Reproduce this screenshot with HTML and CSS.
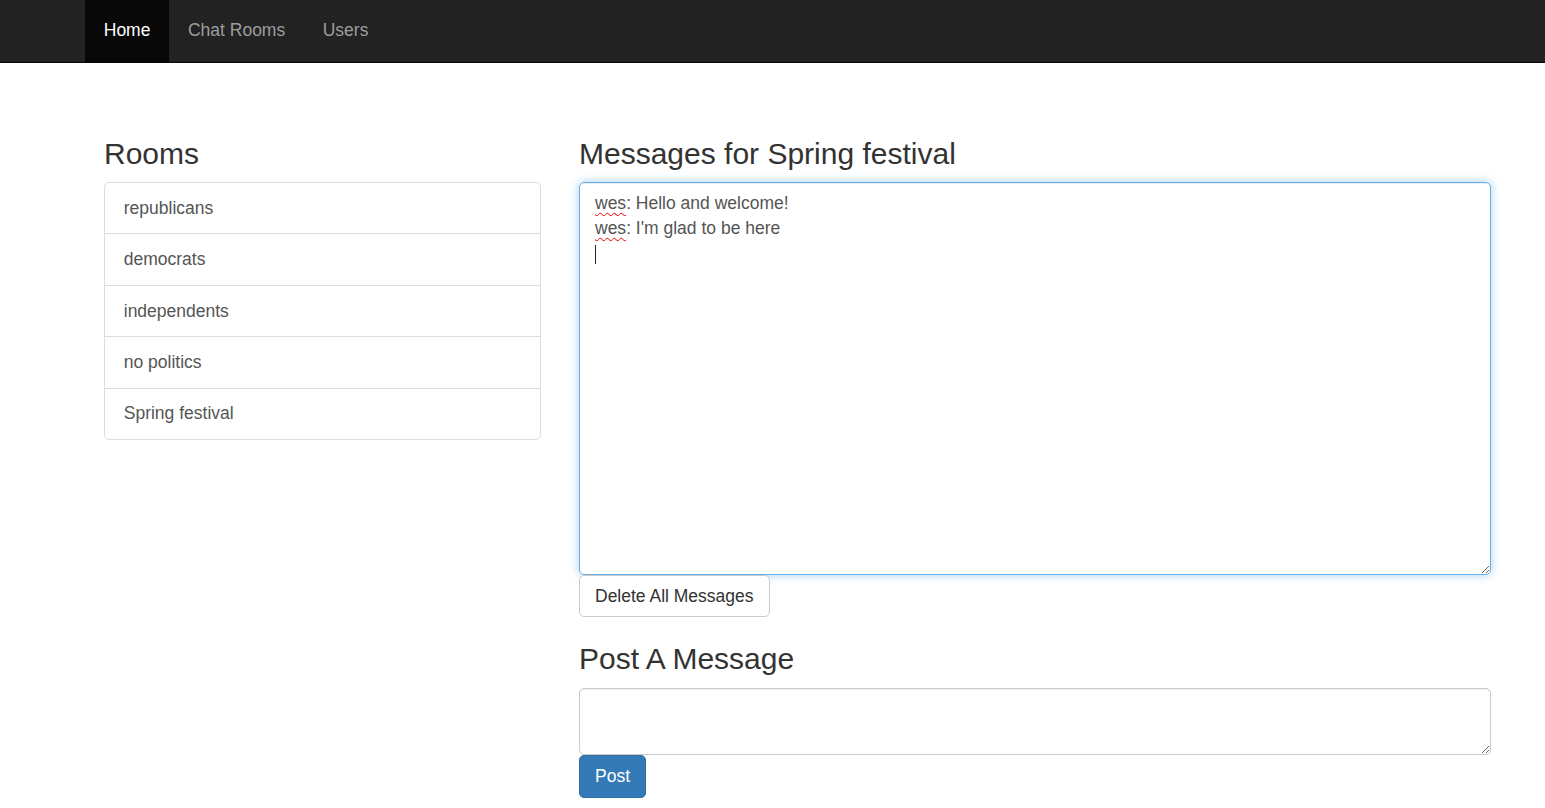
FILE: index.html
```html
<!DOCTYPE html>
<html lang="en">
<head>
<meta charset="utf-8">
<title>Chat</title>
<link rel="stylesheet" href="styles.css">
</head>
<body>
<nav class="navbar">
  <ul class="nav">
    <li><a class="nav-link active" href="#">Home</a></li>
    <li><a class="nav-link" href="#">Chat Rooms</a></li>
    <li><a class="nav-link" href="#">Users</a></li>
  </ul>
</nav>
<main class="main">
  <section class="rooms">
    <h3 class="heading">Rooms</h3>
    <ul class="list-group">
      <li><a class="list-item" href="#">republicans</a></li>
      <li><a class="list-item" href="#">democrats</a></li>
      <li><a class="list-item" href="#">independents</a></li>
      <li><a class="list-item" href="#">no politics</a></li>
      <li><a class="list-item" href="#">Spring festival</a></li>
    </ul>
  </section>
  <section class="chat">
    <h3 class="heading">Messages for Spring festival</h3>
    <div class="messages">
      <div class="line"><span class="misspelt">wes</span>: Hello and welcome!</div>
      <div class="line"><span class="misspelt">wes</span>: I'm glad to be here</div>
      <div class="line"><span class="caret"></span></div>
    </div>
    <button class="btn btn-default" type="button">Delete All Messages</button>
    <h3 class="heading">Post A Message</h3>
    <textarea class="post-input" rows="2"></textarea>
    <button class="btn btn-primary" type="button">Post</button>
  </section>
</main>
</body>
</html>
```
FILE: styles.css
```css
* { box-sizing: border-box; }
html, body { margin: 0; padding: 0; }
body {
  font-family: "Liberation Sans", Arial, sans-serif;
  font-size: 17.5px;
  line-height: 25px;
  color: #333;
  background: #fff;
}
.navbar {
  height: 63px;
  background: #222;
  border-bottom: 1px solid #080808;
  padding-left: 85px;
}
.nav {
  list-style: none;
  margin: 0;
  padding: 0;
  display: flex;
}
.nav-link {
  display: block;
  height: 62px;
  padding: 17.75px 18.75px;
  color: #9d9d9d;
  text-decoration: none;
}
.nav-link.active {
  color: #fff;
  background: #080808;
}
.main {
  display: flex;
  gap: 38px;
  padding: 48.6px 54px 0 104px;
}
.rooms { width: 437px; flex: none; }
.chat { flex: 1; display: flex; flex-direction: column; align-items: flex-start; }
.heading {
  font-size: 30px;
  line-height: 33px;
  font-weight: 500;
  margin: 25px 0 12.5px;
  color: #333;
}
.list-group {
  list-style: none;
  margin: 0;
  padding: 0;
}
.list-item {
  display: block;
  padding: 12.69px 18.75px;
  border: 1px solid #ddd;
  margin-bottom: -1px;
  color: #555;
  text-decoration: none;
  background: #fff;
}
.list-group li:first-child .list-item { border-radius: 5px 5px 0 0; }
.list-group li:last-child .list-item { border-radius: 0 0 5px 5px; }
.messages {
  width: 100%;
  height: 393px;
  padding: 7.5px 15px;
  border: 1px solid #66afe9;
  border-radius: 5px;
  box-shadow: inset 0 1px 1px rgba(0,0,0,.075), 0 0 10px rgba(102,175,233,.6);
  color: #555;
  overflow: auto;
  resize: vertical;
}
.line { height: 25px; }
.misspelt {
  text-decoration: underline wavy #e00;
  text-decoration-thickness: 1px;
  text-underline-offset: 3px;
}
.caret {
  display: inline-block;
  width: 1px;
  height: 19px;
  background: #222;
  vertical-align: -5px;
}
.btn {
  font-family: inherit;
  font-size: 17.5px;
  line-height: 25px;
  padding: 7.5px 15px;
  border: 1px solid #ccc;
  border-radius: 5px;
  cursor: pointer;
}
.btn-default { background: #fff; color: #333; }
.btn-primary { background: #337ab7; color: #fff; border-color: #2e6da4; padding: 8px 15px; }
.post-input {
  display: block;
  width: 100%;
  height: 67px;
  padding: 7.5px 15px;
  font-family: inherit;
  font-size: 17.5px;
  line-height: 25px;
  border: 1px solid #ccc;
  border-radius: 5px;
  box-shadow: inset 0 1px 1px rgba(0,0,0,.075);
  color: #555;
  resize: vertical;
}
```
